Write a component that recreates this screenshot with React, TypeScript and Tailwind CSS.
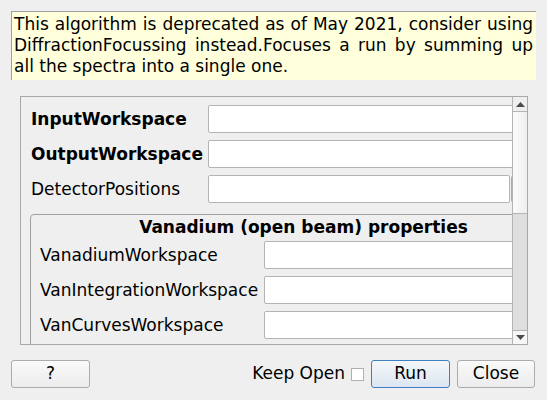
const font = { fontFamily: '"DejaVu Sans", "Liberation Sans", sans-serif' };

function Field({ className = '' }: { className?: string }) {
  return (
    <div
      className={`h-[28px] bg-white border border-[#b4b4b4] rounded-[2px] ${className}`}
    />
  );
}

function Row({
  label,
  bold = false,
  labelWidth,
  children,
}: {
  label: string;
  bold?: boolean;
  labelWidth: string;
  children: React.ReactNode;
}) {
  return (
    <div className="flex items-center h-[28px]">
      <div className={`${labelWidth} shrink-0 text-[17px] pt-[1px] ${bold ? 'font-bold' : ''}`}>
        {label}
      </div>
      {children}
    </div>
  );
}

function Button({ label, primary = false, width }: { label: string; primary?: boolean; width: string }) {
  return (
    <div
      className={`${width} h-[28px] flex items-center justify-center rounded-[3px] border text-[17px] ${
        primary
          ? 'border-[#3d7fc1] bg-gradient-to-b from-[#f4f7fa] to-[#dce6f0]'
          : 'border-[#acacac] bg-gradient-to-b from-[#fafafa] to-[#ececec]'
      }`}
    >
      {label}
    </div>
  );
}

export default function App() {
  return (
    <div className="w-[547px] h-[400px] bg-[#efefef] text-black flex flex-col overflow-hidden" style={font}>
      {/* Description */}
      <div className="pt-[11px] pl-[11px]">
        <div className="w-[525px] h-[69px] bg-[#ffffdc] border-t border-l border-[#a0a0a0] pl-[2px] pr-[3px] pt-[2px] text-[17px] leading-[21px] text-justify">
          This algorithm is deprecated as of May 2021, consider using DiffractionFocussing instead.Focuses a run by summing up all the spectra into a single one.
        </div>
      </div>

      {/* Scroll area */}
      <div className="ml-[20px] mt-[16px] w-[508px] h-[249px] border border-[#a8a8a8] flex">
        <div className="flex-1 overflow-hidden">
          <div className="w-[567px] pt-[8px] flex flex-col">
            <div className="pl-[10px] flex flex-col gap-[7px]">
              <Row label="InputWorkspace" bold labelWidth="w-[177px]">
                <Field className="flex-1" />
              </Row>
              <Row label="OutputWorkspace" bold labelWidth="w-[177px]">
                <Field className="flex-1" />
              </Row>
              <Row label="DetectorPositions" labelWidth="w-[177px]">
                <Field className="w-[302px] shrink-0" />
                <div className="ml-[1px] w-[70px] h-[28px] shrink-0 border border-[#acacac] rounded-[3px] bg-[#f6f6f6]" />
              </Row>
            </div>

            {/* Group box */}
            <div className="ml-[9px] mt-[11px] w-[547px] h-[160px] border border-[#a0a0a0] rounded-[4px] pt-[1px]">
              <div className="h-[24px] flex items-center justify-center font-bold text-[17px]">
                Vanadium (open beam) properties
              </div>
              <div className="mt-[1px] pl-[9px] flex flex-col gap-[7px]">
                <Row label="VanadiumWorkspace" labelWidth="w-[224px]">
                  <Field className="flex-1" />
                </Row>
                <Row label="VanIntegrationWorkspace" labelWidth="w-[224px]">
                  <Field className="flex-1" />
                </Row>
                <Row label="VanCurvesWorkspace" labelWidth="w-[224px]">
                  <Field className="flex-1" />
                </Row>
              </div>
            </div>
          </div>
        </div>

        {/* Scrollbar */}
        <div className="w-[15px] shrink-0 border-l border-[#b4b4b4] flex flex-col">
          <div className="h-[14px] flex items-center justify-center bg-[#efefef]">
            <svg width="9" height="5" viewBox="0 0 9 5">
              <path d="M0 5 L4.5 0 L9 5 Z" fill="#4a4a4a" />
            </svg>
          </div>
          <div className="h-[103px] border-y border-[#b4b4b4] bg-gradient-to-r from-[#fbfbfb] to-[#eeeeee]" />
          <div className="flex-1 bg-[#dedede]" />
          <div className="h-[14px] flex items-center justify-center bg-[#f6f6f6] border-t border-[#b4b4b4]">
            <svg width="9" height="5" viewBox="0 0 9 5">
              <path d="M0 0 L9 0 L4.5 5 Z" fill="#4a4a4a" />
            </svg>
          </div>
        </div>
      </div>

      {/* Bottom buttons */}
      <div className="mt-[15px] pl-[11px] pr-[12px] flex items-center">
        <Button label="?" width="w-[79px]" />
        <div className="flex-1" />
        <span className="text-[17px]">Keep Open</span>
        <div className="ml-[6px] w-[13px] h-[13px] bg-white border border-[#b0b0b0]" />
        <div className="ml-[7px]">
          <Button label="Run" primary width="w-[79px]" />
        </div>
        <div className="ml-[7px]">
          <Button label="Close" width="w-[78px]" />
        </div>
      </div>
    </div>
  );
}
